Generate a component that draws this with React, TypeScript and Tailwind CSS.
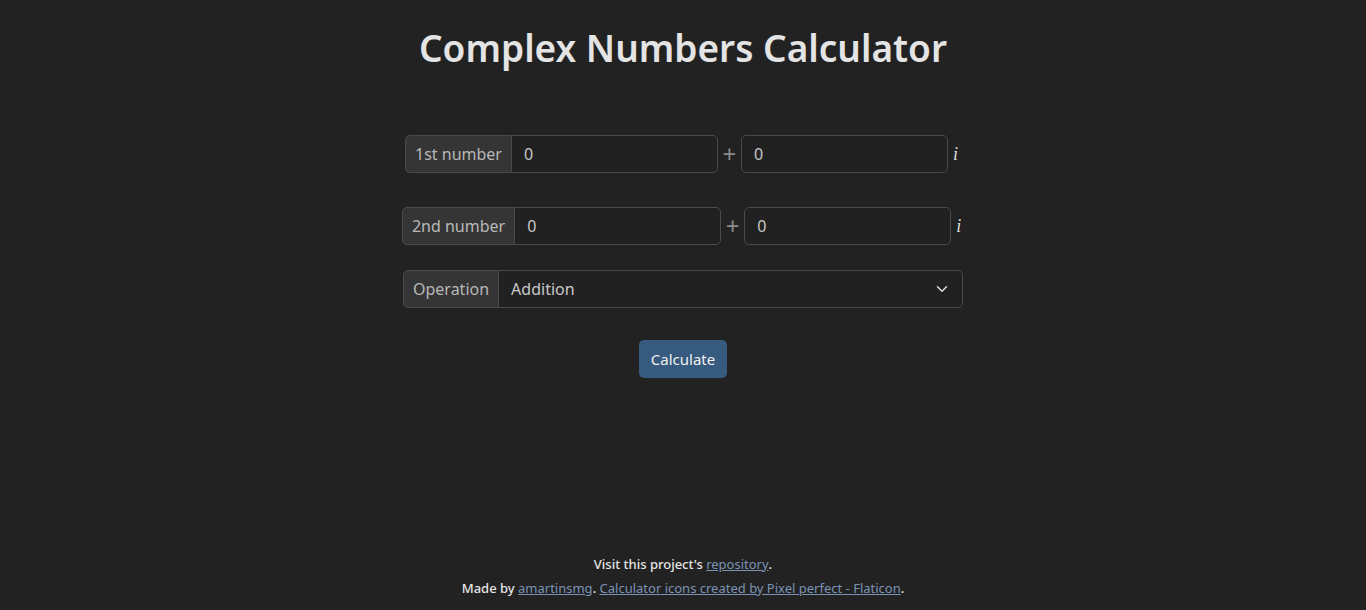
import { useState } from 'react'

function NumberRow({ label, re, im }: { label: string; re: string; im: string }) {
  return (
    <div className="flex items-center">
      <span className="h-[38px] px-[9px] flex items-center rounded-l-[5px] border border-[#4a4a4a] bg-[#353535] text-[#b8b8b8]">
        {label}
      </span>
      <input
        defaultValue={re}
        className="h-[38px] w-[207px] -ml-px px-3 rounded-r-[5px] border border-[#4a4a4a] bg-[#212121] text-[#c8c8c8] outline-none"
      />
      <span className="w-[23px] text-center text-[#8a8a8a] text-[24px] leading-none">+</span>
      <input
        defaultValue={im}
        className="h-[38px] w-[207px] px-3 rounded-[5px] border border-[#4a4a4a] bg-[#212121] text-[#c8c8c8] outline-none"
      />
      <span className="ml-[5px] w-[8px] text-[#dcdcdc] italic font-['Liberation_Serif',serif] text-[18px]">i</span>
    </div>
  )
}

export default function App() {
  const [op, setOp] = useState('Addition')

  return (
    <div className="min-h-[610px] h-[610px] bg-[#222222] text-[#dedede] font-['Noto_Sans',sans-serif] text-[16px] flex flex-col items-center">
      <h1 className="mt-[24px] text-[37px] font-semibold leading-[48px] text-[#e4e4e4]">
        Complex Numbers Calculator
      </h1>

      <div className="mt-[63px] flex flex-col items-center">
        <NumberRow label="1st number" re="0" im="0" />
        <div className="mt-[34px]">
          <NumberRow label="2nd number" re="0" im="0" />
        </div>

        <div className="mt-[25px] flex items-center w-[560px]">
          <span className="h-[38px] px-[9px] flex items-center rounded-l-[5px] border border-[#4a4a4a] bg-[#353535] text-[#b8b8b8]">
            Operation
          </span>
          <div className="relative flex-1 -ml-px">
            <select
              value={op}
              onChange={e => setOp(e.target.value)}
              className="appearance-none h-[38px] w-full px-3 rounded-r-[5px] border border-[#4a4a4a] bg-[#212121] text-[#c8c8c8] outline-none"
            >
              <option>Addition</option>
              <option>Subtraction</option>
              <option>Multiplication</option>
              <option>Division</option>
            </select>
            <svg
              className="pointer-events-none absolute right-[15px] top-1/2 -translate-y-1/2"
              width="12"
              height="12"
              viewBox="0 0 16 16"
              fill="none"
              stroke="#dcdcdc"
              strokeWidth="2"
              strokeLinecap="round"
              strokeLinejoin="round"
            >
              <path d="M2 5l6 6 6-6" />
            </svg>
          </div>
        </div>

        <button className="mt-[32px] h-[38px] px-3 rounded-[5px] bg-[#375a7f] text-[#f0f0f0] text-[15px]">
          Calculate
        </button>
      </div>

      <footer className="mt-auto mb-[10px] flex flex-col items-center text-[13px] font-medium text-[#e6e6e6] leading-[24px]">
        <p>
          Visit this project's{' '}
          <a href="#" className="underline font-normal text-[#7a93b4]">repository</a>.
        </p>
        <p>
          Made by{' '}
          <a href="#" className="underline font-normal text-[#7a93b4]">amartinsmg</a>.{' '}
          <a href="#" className="underline font-normal text-[#7a93b4]">
            Calculator icons created by Pixel perfect - Flaticon
          </a>
          .
        </p>
      </footer>
    </div>
  )
}
